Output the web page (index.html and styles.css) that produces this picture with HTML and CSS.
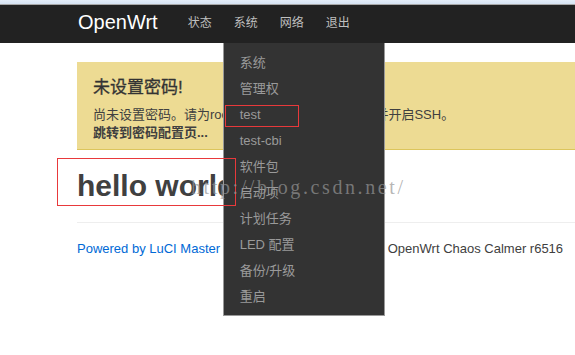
FILE: index.html
```html
<!DOCTYPE html>
<html lang="zh-CN">
<head>
<meta charset="utf-8">
<title>OpenWrt - LuCI</title>
<link rel="stylesheet" href="styles.css">
</head>
<body>
  <div class="chrome"></div>
  <header class="topbar">
    <a class="brand" href="#">OpenWrt</a>
    <ul class="nav">
      <li class="nav-item">状态</li>
      <li class="nav-item open">系统
        <ul class="dropdown">
          <li>系统</li>
          <li>管理权</li>
          <li>test</li>
          <li>test-cbi</li>
          <li>软件包</li>
          <li>启动项</li>
          <li>计划任务</li>
          <li>LED 配置</li>
          <li>备份/升级</li>
          <li>重启</li>
        </ul>
      </li>
      <li class="nav-item">网络</li>
      <li class="nav-item">退出</li>
    </ul>
  </header>

  <main class="container">
    <div class="alert">
      <h4 class="alert-title">未设置密码!</h4>
      <p class="alert-text">尚未设置密码。请为root用户设置密码以保护主机并开启SSH。</p>
      <a class="alert-link" href="#">跳转到密码配置页...</a>
    </div>
    <h2 class="title">hello world</h2>
    <hr class="rule">
    <footer class="footer"><a class="footer-link" href="#">Powered by LuCI Master (git-15.274.3214-c5e4ba0)</a> / OpenWrt Chaos Calmer r6516</footer>
  </main>

  <div class="mark mark-test"></div>
  <div class="mark mark-hello"></div>
  <div class="watermark">http://blog.csdn.net/</div>
</body>
</html>
```

FILE: styles.css
```css
html, body {
  margin: 0;
  padding: 0;
}

body {
  position: relative;
  width: 575px;
  height: 355px;
  overflow: hidden;
  background: #fff;
  color: #404040;
  font-family: "Liberation Sans", "Noto Sans CJK SC", sans-serif;
  font-size: 13px;
  line-height: 18px;
}

.chrome {
  height: 4px;
  background: linear-gradient(#e4edf8, #d6e3f3);
  border-bottom: 1px solid #a8a8a8;
}

.topbar {
  display: flex;
  align-items: flex-start;
  height: 38px;
  padding-left: 78px;
  background: #222;
}

.brand {
  display: block;
  margin-right: 19px;
  color: #fff;
  font-size: 20px;
  line-height: 34px;
  text-decoration: none;
}

.nav {
  display: flex;
  margin: 0;
  padding: 0;
  list-style: none;
}

.nav-item {
  position: relative;
  padding: 0 11px;
  color: #bfbfbf;
  font-size: 12px;
  line-height: 36px;
}

.dropdown {
  position: absolute;
  top: 38px;
  left: 0;
  width: 160px;
  margin: 0;
  padding: 7px 0 5px;
  list-style: none;
  background: #333;
  border: 1px solid #999;
  border-top: none;
  z-index: 5;
}

.dropdown li {
  padding-left: 16px;
  color: #9a9a9a;
  font-size: 13px;
  line-height: 26px;
  white-space: nowrap;
}

.container {
  padding-left: 77px;
}

.alert {
  margin-top: 19px;
  padding: 14px 0 7px 16px;
  background: #eddb93;
  border-bottom: 1px solid #dcc55c;
  white-space: nowrap;
}

.alert-title {
  margin: 0 0 6px;
  font-size: 17px;
  font-weight: normal;
  line-height: 24px;
  color: #333;
  -webkit-text-stroke: 0.3px #333;
}

.alert-text {
  margin: 0;
}

.alert-link {
  display: block;
  color: #404040;
  font-weight: bold;
  text-decoration: none;
}

.title {
  margin: 18px 0 0;
  font-size: 30px;
  font-weight: bold;
  line-height: 36px;
  color: #404040;
}

.rule {
  margin: 18px 0 0;
  border: 0;
  border-top: 1px solid #eee;
}

.footer {
  margin-top: 17px;
  white-space: nowrap;
}

.footer-link {
  color: #0069d6;
  text-decoration: none;
}

.mark {
  position: absolute;
  box-sizing: border-box;
  border: 1px solid #e8393b;
  z-index: 10;
}

.mark-test {
  left: 225px;
  top: 105px;
  width: 74px;
  height: 22px;
}

.mark-hello {
  left: 57px;
  top: 158px;
  width: 179px;
  height: 48px;
}

.watermark {
  position: absolute;
  left: 191px;
  top: 177px;
  z-index: 20;
  font-family: "Liberation Serif", serif;
  font-size: 20px;
  line-height: 20px;
  letter-spacing: 2.6px;
  color: rgba(150, 150, 150, 0.7);
  white-space: nowrap;
  pointer-events: none;
}
```
